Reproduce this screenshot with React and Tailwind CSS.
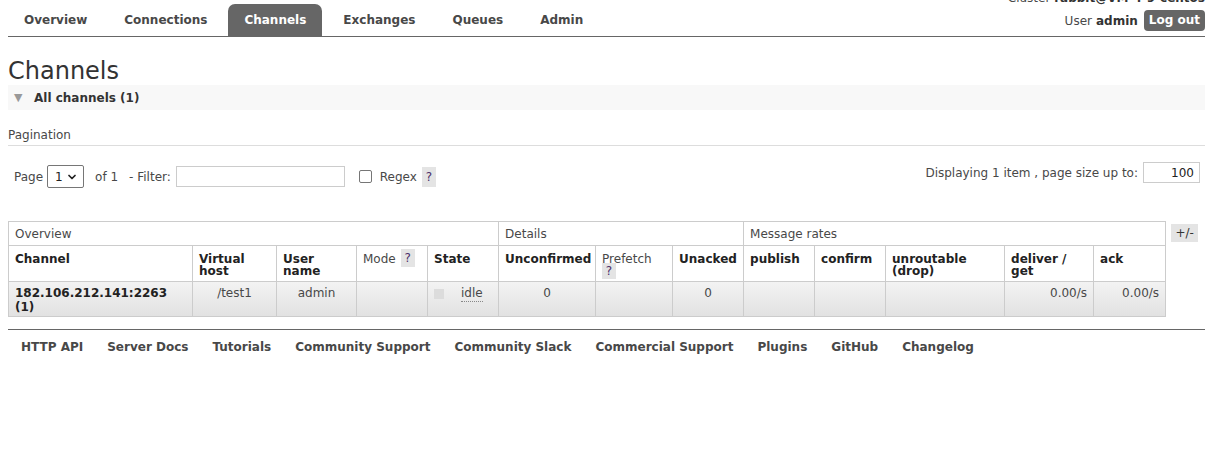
import { ChevronDown } from "lucide-react";

const font = "font-['DejaVu_Sans',Verdana,sans-serif]";

const tabs = ["Overview", "Connections", "Channels", "Exchanges", "Queues", "Admin"];
const footerLinks = [
  "HTTP API",
  "Server Docs",
  "Tutorials",
  "Community Support",
  "Community Slack",
  "Commercial Support",
  "Plugins",
  "GitHub",
  "Changelog",
];

const colWidths = [184, 84, 80, 71, 71, 97, 77, 71, 71, 71, 119, 89, 72];

function Help({ className = "" }) {
  return (
    <span
      className={`inline-flex items-center justify-center bg-[#e4e4e4] text-[#4b2f6b] font-normal ${className}`}
    >
      ?
    </span>
  );
}

function Th({ children, normal = false }) {
  return (
    <th
      className={`border border-[#ccc] align-top text-left px-[6px] pt-[7px] h-[36px] leading-[12px] text-[12px] ${
        normal ? "font-normal text-[#484848]" : "font-bold text-[#222]"
      }`}
    >
      {children}
    </th>
  );
}

function Td({ children, align = "text-left", bold = false }) {
  return (
    <td
      className={`border border-[#ccc] align-top px-[6px] pt-[4px] h-[35px] leading-[14px] text-[12px] ${align} ${
        bold ? "font-bold text-[#222]" : "text-[#484848]"
      }`}
    >
      {children}
    </td>
  );
}

export default function App() {
  return (
    <div className={`${font} bg-white text-[#484848] pl-[8px] pr-[25px] min-h-[471px] overflow-hidden`}>
      {/* Header */}
      <header className="flex items-end justify-between h-[37px] border-b border-[#666]">
        <nav className="flex items-end gap-[5px]">
          {tabs.map((t) => (
            <a
              key={t}
              className={`h-[32px] px-4 flex items-center text-[12px] font-bold rounded-t-[7px] ${
                t === "Channels" ? "bg-[#666] text-white" : "text-[#484848]"
              }`}
            >
              {t}
            </a>
          ))}
        </nav>
        <div className="flex flex-col items-end pb-[5px] text-[12px]">
          <p className="leading-[16px] mb-[4px]">
            Cluster <b className="text-[#333]">rabbit@VM-4-9-centos</b>
          </p>
          <div className="flex items-center h-[21px]">
            <span>User</span>
            <b className="ml-[4px] text-[#333]">admin</b>
            <button className="ml-[6px] h-[21px] px-[5px] rounded-[4px] bg-[#666] text-white font-bold text-[12px] leading-[21px]">
              Log out
            </button>
          </div>
        </div>
      </header>

      {/* Title */}
      <h1 className="mt-[20px] text-[24px] leading-[28px] font-normal text-[#333]">Channels</h1>

      <div className="h-[25px] bg-[#f8f8f8] flex items-center pl-[6px]">
        <span className="text-[#999] text-[11px] leading-none w-[20px]">▼</span>
        <span className="font-bold text-[12px] text-[#333]">All channels (1)</span>
      </div>

      {/* Pagination */}
      <h3 className="mt-[16px] text-[12px] leading-[19px] border-b border-[#ddd] text-[#484848]">Pagination</h3>

      <div className="flex items-start justify-between text-[12px]">
        <div className="flex items-center h-[23px] mt-[19px] pl-[6px]">
          <span>Page</span>
          <div className="ml-[4px] w-[37px] h-[23px] border border-[#767676] rounded-[2px] flex items-center justify-between pl-[7px] pr-[5px] text-[#222]">
            <span>1</span>
            <ChevronDown size={12} strokeWidth={3.5} />
          </div>
          <span className="ml-[11px]">of 1</span>
          <span className="ml-[11px]">- Filter:</span>
          <div className="ml-[5px] w-[169px] h-[21px] border border-[#ccc]" />
          <div className="ml-[14px] w-[13px] h-[13px] border border-[#767676] rounded-[2px]" />
          <span className="ml-[8px]">Regex</span>
          <Help className="ml-[5px] w-[14px] h-[20px] text-[12px]" />
        </div>
        <div className="flex items-center mt-[16px] pr-[5px]">
          <span>Displaying 1 item , page size up to:</span>
          <div className="ml-[5px] w-[57px] h-[21px] border border-[#ccc] flex items-center justify-end pr-[5px] text-[#222]">
            100
          </div>
        </div>
      </div>

      {/* Table */}
      <div className="flex items-start mt-[33px]">
        <table className="table-fixed border-collapse w-[1157px]">
          <colgroup>
            {colWidths.map((w, i) => (
              <col key={i} style={{ width: w }} />
            ))}
          </colgroup>
          <thead>
            <tr>
              <th colSpan={5} className="border border-[#ccc] text-left font-normal text-[12px] h-[24px] px-[6px] text-[#484848]">
                Overview
              </th>
              <th colSpan={3} className="border border-[#ccc] text-left font-normal text-[12px] h-[24px] px-[6px] text-[#484848]">
                Details
              </th>
              <th colSpan={5} className="border border-[#ccc] text-left font-normal text-[12px] h-[24px] px-[6px] text-[#484848]">
                Message rates
              </th>
            </tr>
            <tr>
              <Th>Channel</Th>
              <Th>
                Virtual
                <br />
                host
              </Th>
              <Th>
                User
                <br />
                name
              </Th>
              <Th normal>
                <span className="inline-flex items-start">
                  Mode
                  <Help className="ml-[5px] -mt-[4px] w-[14px] h-[18px] text-[12px]" />
                </span>
              </Th>
              <Th>State</Th>
              <Th>Unconfirmed</Th>
              <Th normal>
                Prefetch
                <br />
                <Help className="w-[14px] h-[16px] text-[12px] -mt-[2px]" />
              </Th>
              <Th>Unacked</Th>
              <Th>publish</Th>
              <Th>confirm</Th>
              <Th>
                unroutable
                <br />
                (drop)
              </Th>
              <Th>
                deliver /
                <br />
                get
              </Th>
              <Th>ack</Th>
            </tr>
          </thead>
          <tbody>
            <tr className="bg-linear-to-b from-[#f3f3f3] to-[#e1e1e1]">
              <Td bold>
                182.106.212.141:2263
                <br />
                (1)
              </Td>
              <Td align="text-center">/test1</Td>
              <Td align="text-center">admin</Td>
              <Td />
              <Td>
                <div className="flex items-start">
                  <span className="mt-[3px] w-[10px] h-[10px] bg-[#dcdcdc]" />
                  <span className="ml-[17px] border-b border-dotted border-[#888] leading-[15px]">idle</span>
                </div>
              </Td>
              <Td align="text-center">0</Td>
              <Td />
              <Td align="text-center">0</Td>
              <Td />
              <Td />
              <Td />
              <Td align="text-right">0.00/s</Td>
              <Td align="text-right">0.00/s</Td>
            </tr>
          </tbody>
        </table>
        <button className="ml-[5px] mt-[3px] w-[27px] h-[18px] bg-[#e4e4e4] text-[12px] leading-[18px] text-[#333]">
          +/-
        </button>
      </div>

      {/* Footer */}
      <footer className="mt-[12px] border-t border-[#666] pt-[10px] flex pl-[1px]">
        {footerLinks.map((l) => (
          <a key={l} className="px-[12px] text-[12px] font-bold leading-[14px] text-[#484848]">
            {l}
          </a>
        ))}
      </footer>
    </div>
  );
}
